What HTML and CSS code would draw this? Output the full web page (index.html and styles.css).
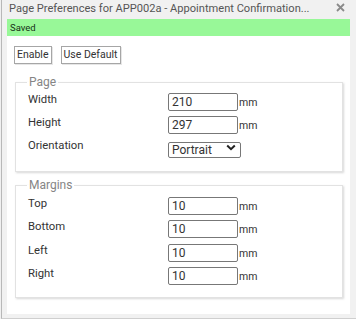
FILE: index.html
```html
<!DOCTYPE html>
<html>
<head>
<meta charset="utf-8">
<link rel="stylesheet" href="styles.css">
</head>
<body>
<div class="dialog">
  <div class="titlebar">
    <span class="title">Page Preferences for APP002a - Appointment Confirmation...</span>
    <svg class="close" width="9" height="9" viewBox="0 0 9 9"><path d="M1 1L8 8M8 1L1 8" stroke="#8a8a8a" stroke-width="1.8"/></svg>
  </div>
  <div class="panel">
    <div class="status">Saved</div>
    <div class="toolbar">
      <button class="btn">Enable</button>
      <button class="btn">Use Default</button>
    </div>
    <fieldset class="group group-page">
      <legend>Page</legend>
      <div class="row">
        <span class="label">Width</span>
        <input class="field" type="text" value="210"><span class="unit">mm</span>
      </div>
      <div class="row">
        <span class="label">Height</span>
        <input class="field" type="text" value="297"><span class="unit">mm</span>
      </div>
      <div class="row row-select">
        <span class="label">Orientation</span>
        <div class="select-wrap">
          <select class="select"><option>Portrait</option><option>Landscape</option></select>
          <svg class="chev" width="10" height="7" viewBox="0 0 10 7"><path d="M1.2 1.5L5 5.2L8.8 1.5" fill="none" stroke="#222" stroke-width="2"/></svg>
        </div>
      </div>
    </fieldset>
    <fieldset class="group group-margins">
      <legend>Margins</legend>
      <div class="row">
        <span class="label">Top</span>
        <input class="field" type="text" value="10"><span class="unit">mm</span>
      </div>
      <div class="row">
        <span class="label">Bottom</span>
        <input class="field" type="text" value="10"><span class="unit">mm</span>
      </div>
      <div class="row">
        <span class="label">Left</span>
        <input class="field" type="text" value="10"><span class="unit">mm</span>
      </div>
      <div class="row">
        <span class="label">Right</span>
        <input class="field" type="text" value="10"><span class="unit">mm</span>
      </div>
    </fieldset>
  </div>
</div>
</body>
</html>
```
FILE: styles.css
```css
html, body {
  margin: 0;
  padding: 0;
  background: #f0f0f0;
}
body {
  width: 356px;
  height: 319px;
  overflow: hidden;
  font-family: Roboto, "Open Sans", sans-serif;
}
.dialog {
  box-sizing: border-box;
  width: 355px;
  height: 319px;
  margin-left: 1px;
  background: #f1f1f1;
  border-left: 1px solid #b8b8b8;
  border-bottom: 1px solid #cfcfcf;
  padding: 0 6px 4px 5px;
  display: flex;
  flex-direction: column;
}
.titlebar {
  height: 19px;
  display: flex;
  align-items: center;
  justify-content: space-between;
  padding-left: 2px;
  padding-right: 5px;
}
.title {
  font-size: 11.1px;
  color: #555;
  white-space: nowrap;
  line-height: 19px;
  margin-top: -3px;
}
.close {
  margin-top: -4px;
}
.panel {
  flex: 1;
  background: #fff;
  display: flex;
  flex-direction: column;
}
.status {
  height: 17px;
  background: #98f898;
  color: #163016;
  font-size: 9.5px;
  line-height: 17px;
  padding-left: 3px;
}
.toolbar {
  display: flex;
  gap: 9px;
  padding: 10px 0 0 7px;
}
.btn {
  font-family: inherit;
  font-size: 10.5px;
  color: #333;
  background: #fff;
  border: 1px solid #a6a6a6;
  border-radius: 0;
  height: 18px;
  padding: 0 2px;
  line-height: 14px;
  box-shadow: 1px 1px 0 #e6e6e6;
}
.group {
  margin: 0 7px 0 8px;
  border: 1px solid #e2e2e2;
  box-shadow: 1px 1px 2px #d8d8d8;
  padding: 0 0 0 12px;
}
.group legend {
  font-size: 12px;
  color: #858585;
  padding: 0 2px;
  margin-left: -1px;
  line-height: 12px;
  height: 12px;
}
.group-page {
  margin-top: 12px;
  padding-top: 5px;
  padding-bottom: 16px;
}
.group-margins {
  margin-top: 7px;
  padding-top: 6px;
  padding-bottom: 12px;
}
.row {
  display: flex;
  align-items: flex-start;
  height: 18px;
  margin-bottom: 5px;
}
.row-select {
  height: 16px;
}
.group-margins .row {
  margin-bottom: 5.3px;
}
.row:last-child {
  margin-bottom: 0;
}
.label {
  width: 140px;
  font-size: 11.3px;
  color: #333;
  line-height: 14px;
  flex: none;
}
.field {
  box-sizing: border-box;
  width: 70px;
  height: 18px;
  border: 1px solid #777;
  border-radius: 2px;
  padding: 0 3px;
  font-family: inherit;
  font-size: 12px;
  color: #333;
  margin: 0;
  flex: none;
}
.unit {
  font-size: 10.5px;
  color: #333;
  line-height: 12px;
  margin-top: 4px;
  margin-left: 1px;
}
.select-wrap {
  position: relative;
  width: 73px;
  height: 16px;
}
.select {
  -webkit-appearance: none;
  appearance: none;
  box-sizing: border-box;
  width: 73px;
  height: 16px;
  border: 1px solid #777;
  border-radius: 2px;
  background: #fff;
  padding: 0 3px;
  font-family: inherit;
  font-size: 12px;
  color: #333;
  line-height: 14px;
  margin: 0;
}
.chev {
  position: absolute;
  right: 5px;
  top: 5px;
  pointer-events: none;
}
```
